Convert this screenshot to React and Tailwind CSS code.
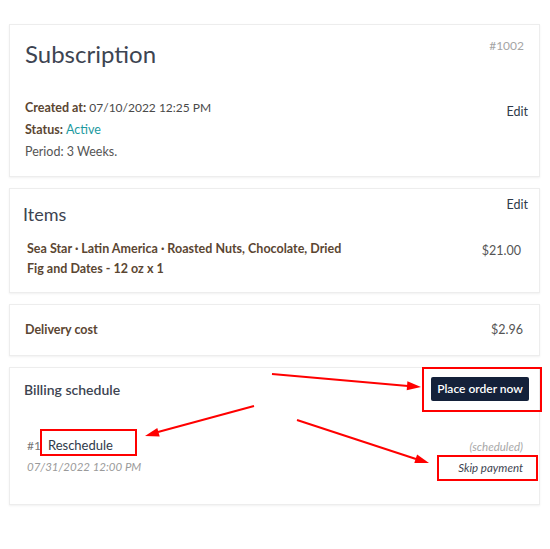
import React from 'react';

const card = 'bg-white border border-[#ededed] shadow-[0_1px_2px_rgba(0,0,0,0.06)]';

function Annotations() {
  return (
    <svg className="absolute inset-0 pointer-events-none" width="550" height="549" viewBox="0 0 550 549">
      <g stroke="#ff0000" strokeWidth="2" fill="none">
        <rect x="423" y="368" width="118" height="43" />
        <rect x="41" y="430" width="95" height="25" />
        <rect x="438" y="456" width="99" height="24" />
        <line x1="272" y1="374" x2="408" y2="386" />
        <line x1="254" y1="406" x2="158" y2="432" />
        <line x1="297" y1="420" x2="416" y2="459" />
      </g>
      <g fill="#ff0000">
        <polygon points="421,387 406.7,390.3 407.4,381.3" />
        <polygon points="145,436 157.3,428 159.7,436.6" />
        <polygon points="429,463 414.3,463 417.1,454.4" />
      </g>
    </svg>
  );
}

export default function App() {
  return (
    <div className="relative w-[550px] h-[549px] bg-white font-['Lato',sans-serif] text-[12px] text-[#3d4451]">
      <div className="flex flex-col gap-[11px] pl-[9px] pr-[10px] pt-[24px]">
        {/* Subscription */}
        <div className={`${card} flex justify-between h-[153px]`}>
          <div className="pl-[15px] pt-[13px]">
            <h1 className="text-[24px] leading-[32px] text-[#3d4451]">Subscription</h1>
            <div className="mt-[27px] leading-[22px]">
              <div>
                <span className="font-bold text-[12.5px] text-[#5b4632]">Created at:</span>{' '}
                <span className="text-[#4a4a4a]">07/10/2022 12:25 PM</span>
              </div>
              <div>
                <span className="font-bold text-[12.5px] text-[#5b4632]">Status:</span>{' '}
                <span className="text-[12.5px] text-[#1b9aa0]">Active</span>
              </div>
              <div className="text-[12.5px] text-[#555]">Period: 3 Weeks.</div>
            </div>
          </div>
          <div className="flex flex-col items-end pr-[11px] pt-[12px] leading-[18px]">
            <span className="pr-[4px] text-[#a5a5a5]">#1002</span>
            <span className="mt-[48px] text-[12.5px] text-[#2f3a4a]">Edit</span>
          </div>
        </div>

        {/* Items */}
        <div className={`${card} h-[105px]`}>
          <div className="flex justify-between">
            <h2 className="pl-[13px] pt-[12px] text-[18px] leading-[26px] text-[#3d4451]">Items</h2>
            <span className="pr-[11px] pt-[7px] leading-[18px] text-[12.5px] text-[#2f3a4a]">Edit</span>
          </div>
          <div className="flex justify-between items-start mt-[12px]">
            <div className="pl-[17px] leading-[20px] text-[12.5px] font-bold text-[#5b4632]">
              Sea Star · Latin America · Roasted Nuts, Chocolate, Dried
              <br />
              Fig and Dates - 12 oz x 1
            </div>
            <span className="pr-[18px] leading-[24px] text-[12.5px] text-[#555]">$21.00</span>
          </div>
        </div>

        {/* Delivery */}
        <div className={`${card} h-[52px] flex justify-between items-center pl-[15px] pr-[16px]`}>
          <span className="font-bold text-[12.5px] text-[#5b4632]">Delivery cost</span>
          <span className="text-[12.5px] text-[#555]">$2.96</span>
        </div>

        {/* Billing */}
        <div className={`${card} h-[138px]`}>
          <div className="flex justify-between items-center pl-[14px] pr-[10px] pt-[9px]">
            <h3 className="text-[14px] font-semibold text-[#3d4451]">Billing schedule</h3>
            <button className="h-[24px] w-[98px] rounded-[2px] bg-[#14213a] text-white text-[12px] font-semibold">
              Place order now
            </button>
          </div>
          <div className="flex justify-between mt-[34px] pl-[17px] pr-[16px] leading-[21px]">
            <div>
              <div className="flex items-baseline">
                <span className="text-[#777]">#1</span>
                <span className="ml-[7px] text-[13px] text-[#2f3a4a]">Reschedule</span>
              </div>
              <div className="italic text-[11.5px] text-[#9a9a9a]">07/31/2022 12:00 PM</div>
            </div>
            <div className="flex flex-col items-end">
              <span className="italic text-[11.5px] text-[#a8a8a8] mt-[1px]">(scheduled)</span>
              <span className="italic text-[11.5px] text-[#3d4451]">Skip payment</span>
            </div>
          </div>
        </div>
      </div>
      <Annotations />
    </div>
  );
}
